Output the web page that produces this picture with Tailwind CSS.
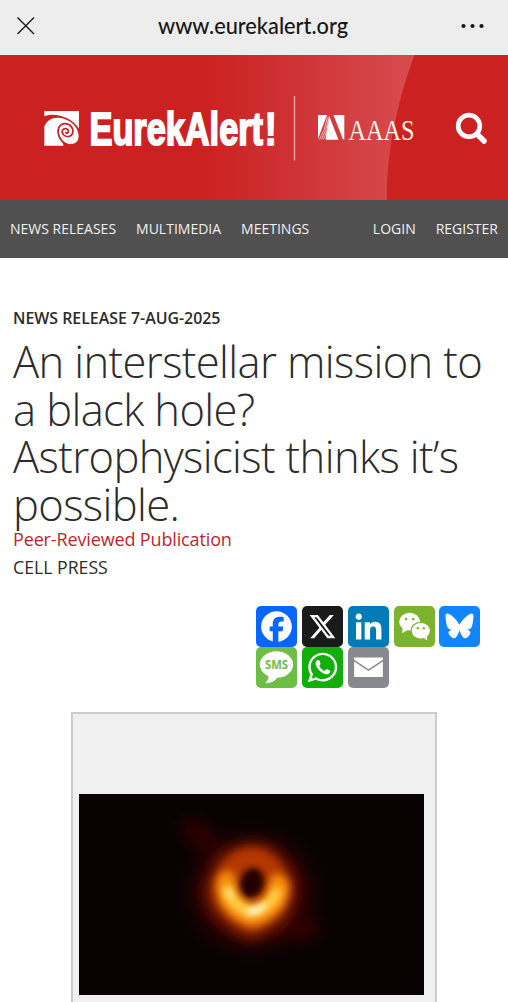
<!DOCTYPE html>
<html lang="en">
<head>
<meta charset="utf-8">
<title>EurekAlert!</title>
<script src="https://cdn.jsdelivr.net/npm/@tailwindcss/browser@4"></script>
</head>
<body class="w-[508px] h-[1002px] overflow-hidden bg-white font-['Open_Sans',sans-serif] text-[#2b2b2b]">
<div class="flex flex-col h-[1002px] overflow-hidden">
  <div class="h-[55px] shrink-0 bg-[#ededed] flex items-center justify-between pl-[16px] pr-[23px]">
    <svg class="w-[20px] h-[20px] mb-[4px]" viewBox="0 0 20 20" fill="none" stroke="#222" stroke-width="1.5"><path d="M1.5 1.5 18 18M18 1.5 1.5 18"/></svg>
    <svg class="w-[220px] h-[50px] ml-[9px] overflow-visible" viewBox="0 0 220 50"><text x="15" y="31" font-family="Lato, sans-serif" font-weight="500" font-size="22.5" fill="#161616" textLength="190" lengthAdjust="spacingAndGlyphs">www.eurekalert.org</text></svg>
    <svg class="w-[24px] h-[6px] mb-[4px]" viewBox="0 0 24 6" fill="#161616"><circle cx="2.500" cy="3" r="2.100"/><circle cx="11.500" cy="3" r="2.100"/><circle cx="20.500" cy="3" r="2.100"/></svg>
  </div>
  <header class="h-[145px] shrink-0">
    <svg class="w-[508px] h-[145px] block" viewBox="0 55 508 145">
      <defs><linearGradient id="sheen" gradientUnits="userSpaceOnUse" x1="205" y1="0" x2="405" y2="0"><stop offset="0" stop-color="#cc2121"/><stop offset=".5" stop-color="#d03538"/><stop offset="1" stop-color="#d74a4d"/></linearGradient></defs>
      <rect y="55" width="508" height="145" fill="#cc2121"/>
      <path d="M190 55H414.500C399 96 386 150 387 200H190Z" fill="url(#sheen)"/>
      <g transform="translate(44.300 111)">
        <path fill="#fff" d="M0 0H34.700V17.500C29 9 19 4 8 3.700 5 3.700 2 4.300 0 5.300Z"/>
        <path fill="#fff" d="M0 34.700V16C2 9.500 8 6.500 14 6.800 25 7.500 33.500 15 34.300 24 34.600 29.500 32 33 27 33L19 34.700Z"/>
        <path fill="none" stroke="#cc2121" stroke-width="1.700" stroke-linecap="round" d="M21.500 33.500C15 29 12.500 22 14.500 16.500 17 11.500 24 11.500 27.300 16 30 20 28.500 25 24.500 25.500 20 26 16.800 22.500 18.300 19 20 16.500 24 17.500 24.200 20.500 24 22.500 22 22.500 21.500 21.500"/>
        <path fill="#cc2121" d="M18 30.500 26 33.500V35.200H19.500Z"/>
      </g>
      <text x="89.500" y="145.400" font-family="'Liberation Sans Narrow','Liberation Sans',sans-serif" font-weight="700" font-size="46" fill="#fff" stroke="#fff" stroke-width="2" textLength="173.500" lengthAdjust="spacingAndGlyphs">EurekAlert</text>
      <text x="264.500" y="145.400" font-family="'Liberation Sans Narrow','Liberation Sans',sans-serif" font-weight="700" font-size="46" fill="#fff" stroke="#fff" stroke-width="1.500" textLength="12.500" lengthAdjust="spacingAndGlyphs">!</text>
      <path d="M294.500 96V160.500" stroke="#dda09c" stroke-width="1.500"/>
      <g transform="translate(318 115)"><path fill="#fff" d="M0 0H9L0 24Z"/><path fill="#fff" d="M11 .5 20.500 24.800H7.500Z"/><path fill="#fff" d="M15.500 0H26.300V24.500H25Z"/><path fill="none" d="M1.500 24.500Q7.500 14 9.500 2M3.500 24.500Q9 14 10.500 4M5.500 24.500Q10 15 11 6" stroke="#f3c9c6" stroke-width=".9"/></g>
      <text x="348.500" y="140" font-family="'Liberation Serif',serif" font-size="28.500" fill="#fff3e6" textLength="66" lengthAdjust="spacingAndGlyphs">AAAS</text>
      <g fill="none" stroke="#fff" stroke-width="4.700"><circle cx="469" cy="126" r="10.800"/><path d="M477 134 484 141" stroke-width="5.500" stroke-linecap="round"/></g>
    </svg>
  </header>
  <nav class="h-[58px] shrink-0 bg-[#505050] text-[#f0f0f0] text-[14px] flex items-center px-[10px] pb-[1px] whitespace-nowrap">
    <span>NEWS RELEASES</span><span class="ml-[20px]">MULTIMEDIA</span><span class="ml-[20px]">MEETINGS</span>
    <span class="ml-auto">LOGIN</span><span class="ml-[20px]">REGISTER</span>
  </nav>
  <main class="flex flex-col px-[13px] pt-[49px]">
    <p class="text-[15.900px] leading-[22px] font-semibold">NEWS RELEASE 7-AUG-2025</p>
    <h1 class="mt-[9px] text-[43.500px] leading-[47.500px] tracking-[-0.600px] font-light whitespace-nowrap">An interstellar mission to<br>a black hole?<br>Astrophysicist thinks it’s<br>possible.</h1>
    <p class="mt-[-2px] text-[18px] leading-[26px] tracking-[-0.140px] text-[#c01f2c]">Peer-Reviewed Publication</p>
    <p class="mt-[2px] text-[17.700px] leading-[26px]">CELL PRESS</p>
    <div class="mt-[25.500px] ml-[243.300px] flex flex-wrap gap-x-[4.800px] w-[230px]">
      <svg class="size-[41px] rounded-[5px] bg-[#0866ff]" viewBox="0 0 32 32"><path fill="#fff" d="M28 16c0-6.627-5.373-12-12-12S4 9.373 4 16c0 5.628 3.875 10.350 9.101 11.647v-7.980h-2.474V16H13.100v-1.580c0-4.085 1.849-5.978 5.859-5.978.76 0 2.072.15 2.608.298v3.325c-.283-.03-.775-.045-1.386-.045-1.967 0-2.728.745-2.728 2.683V16h3.920l-.673 3.667h-3.247v8.245C23.395 27.195 28 22.135 28 16"/></svg>
      <svg class="size-[41px] rounded-[5px] bg-[#1a1a1a]" viewBox="0 0 32 32"><path fill="#fff" d="M21.751 7h3.067l-6.700 7.658L26 25.078h-6.172l-4.833-6.320-5.531 6.320h-3.070l7.167-8.190L6 7h6.328l4.370 5.777L21.750 7Zm-1.076 16.242h1.700L11.404 8.740H9.580l11.094 14.503Z"/></svg>
      <svg class="size-[41px] rounded-[5px] bg-[#007bb5]" viewBox="0 0 32 32"><path fill="#fff" d="M6.227 12.610h4.190v13.480h-4.190zm2.095-6.700a2.430 2.430 0 0 1 0 4.860c-1.344 0-2.428-1.090-2.428-2.430s1.084-2.430 2.428-2.430m4.720 6.700h4.020v1.840h.058c.56-1.058 1.927-2.176 3.965-2.176 4.238 0 5.020 2.792 5.020 6.420v7.395h-4.183v-6.560c0-1.564-.03-3.574-2.178-3.574-2.180 0-2.514 1.700-2.514 3.460v6.668h-4.187z"/></svg>
      <svg class="size-[41px] rounded-[5px] bg-[#7bb32e]" viewBox="0 0 32 32"><g fill="#fff"><ellipse cx="12.200" cy="12.200" rx="8.200" ry="6.900"/><path d="M7 16 6.300 21.300 11 18.500Z"/></g><ellipse cx="20.800" cy="19.200" rx="8" ry="6.900" fill="#7bb32e"/><g fill="#fff"><ellipse cx="20.900" cy="19.300" rx="7.100" ry="6"/><path d="M22 24 26 27 25.600 22.500Z"/></g><g fill="#7bb32e"><circle cx="9.400" cy="10.200" r="1.050"/><circle cx="15" cy="10.200" r="1.050"/><circle cx="18.600" cy="17.300" r=".95"/><circle cx="23.300" cy="17.300" r=".95"/></g></svg>
      <svg class="size-[41px] rounded-[5px] bg-[#1185fe]" viewBox="0 0 32 32"><path fill="#fff" d="M16 14.700C14.800 12.200 11.400 8.200 8.300 6.400 6.300 5.300 5.100 5.700 5.100 8 5.100 10 5.700 14 6.200 15.600 6.900 17.700 8.400 18.500 10.300 18.600 8 19.200 6.400 20.400 8.200 22.600 9.600 24.400 11.600 26.200 13.300 24.300 14.700 22.700 15.400 20.800 16 19.200 16.600 20.800 17.300 22.700 18.700 24.300 20.400 26.200 22.400 24.400 23.800 22.600 25.600 20.400 24 19.200 21.700 18.600 23.600 18.500 25.100 17.700 25.800 15.600 26.300 14 26.900 10 26.900 8 26.900 5.700 25.700 5.300 23.700 6.400 20.600 8.200 17.200 12.200 16 14.700Z"/></svg>
      <svg class="size-[41px] rounded-[5px] bg-[#6cbe45]" viewBox="0 0 32 32"><ellipse cx="16" cy="13.700" rx="13" ry="10.300" fill="#fff"/><path fill="#fff" d="M9.500 20C10.500 24 9 26.500 7 28.300 12 28 15.500 26.500 17 23Z"/><text x="7" y="17" font-family="'Open Sans',sans-serif" font-weight="700" font-size="9.500" fill="#6cbe45" textLength="18" lengthAdjust="spacingAndGlyphs">SMS</text></svg>
      <svg class="size-[41px] rounded-[5px] bg-[#12af0a]" viewBox="0 0 32 32"><path fill="#fff" fill-rule="evenodd" d="M16.210 4.410C9.973 4.410 4.917 9.465 4.917 15.700c0 2.134.592 4.130 1.620 5.832L4.500 27.590l6.250-2.002a11.240 11.240 0 0 0 5.460 1.404c6.234 0 11.290-5.055 11.290-11.290 0-6.237-5.056-11.292-11.290-11.292m0 20.690c-1.910 0-3.690-.57-5.173-1.553l-3.610 1.156 1.173-3.490a9.350 9.350 0 0 1-1.790-5.512c0-5.180 4.217-9.400 9.400-9.400s9.397 4.220 9.397 9.400c0 5.188-4.214 9.400-9.398 9.400zm5.293-6.832c-.284-.155-1.673-.906-1.934-1.012-.265-.106-.455-.16-.658.12s-.78.91-.954 1.096c-.176.186-.345.203-.628.048-.282-.154-1.200-.494-2.264-1.517-.83-.795-1.373-1.760-1.530-2.055s0-.445.15-.584c.134-.124.3-.326.45-.488.15-.163.203-.28.306-.47.104-.19.06-.36-.005-.506-.066-.147-.59-1.587-.81-2.173-.218-.586-.46-.498-.63-.505-.168-.007-.358-.038-.55-.045-.19-.007-.51.054-.78.332-.277.274-1.050.943-1.100 2.362-.055 1.418.926 2.826 1.064 3.023.137.2 1.874 3.272 4.760 4.537 2.888 1.264 2.900.878 3.430.85.53-.027 1.734-.633 2-1.297s.287-1.240.22-1.363c-.07-.123-.26-.19-.54-.346z"/></svg>
      <svg class="size-[41px] rounded-[5px] bg-[#88898f]" viewBox="0 0 32 32"><rect x="4.800" y="8.200" width="22.400" height="15.200" fill="#fff"/><path d="M4.500 10.500 16 18 27.500 10.500" fill="none" stroke="#88898f" stroke-width="1.200"/></svg>
    </div>
    <figure class="mt-[24.500px] ml-[58px] w-[366px] h-[330px] shrink-0 border-2 border-[#ccc] bg-[#f0f0f0] pt-[80px] pl-[6px]">
      <svg class="w-[345px] h-[201px] block" viewBox="0 0 345 201">
        <defs>
          <filter id="b2" x="-100%" y="-100%" width="300%" height="300%"><feGaussianBlur stdDeviation="3"/></filter>
          <filter id="b4" x="-50%" y="-50%" width="200%" height="200%"><feGaussianBlur stdDeviation="4.500"/></filter>
          <filter id="b8" x="-60%" y="-60%" width="220%" height="220%"><feGaussianBlur stdDeviation="8"/></filter>
          <filter id="b12" x="-60%" y="-60%" width="220%" height="220%"><feGaussianBlur stdDeviation="12"/></filter>
        </defs>
        <rect width="345" height="201" fill="#080202"/>
        <g filter="url(#b12)"><ellipse cx="173" cy="98" rx="55" ry="50" fill="#4a0500"/></g>
        <g filter="url(#b8)"><ellipse cx="122" cy="43" rx="24" ry="12" transform="rotate(42 122 43)" fill="#2e0300"/><ellipse cx="221" cy="134" rx="20" ry="12" fill="#300300"/><path d="M172 52C196 51 213 74 213 96 213 120 187 138 172 144 157 137 130 119 130 99 132 74 151 53 172 52Z" fill="#a63000"/></g>
        <g filter="url(#b4)" fill="none" stroke-linecap="round"><ellipse cx="172" cy="91" rx="25" ry="27" stroke="#b53804" stroke-width="17"/><path d="M147 88C145 107 160 120 174 123 190 119 202 105 200 91" stroke="#fa900e" stroke-width="20"/></g>
        <g filter="url(#b2)"><path d="M149 97C153 109 164 117 175 117 185 115 194 107 197 99" fill="none" stroke="#ffca42" stroke-width="11" stroke-linecap="round"/><ellipse cx="173" cy="89" rx="11.500" ry="15" transform="rotate(15 173 89)" fill="#200200"/><ellipse cx="177" cy="116" rx="11" ry="4.500" transform="rotate(-28 177 116)" fill="#fff6b0"/><ellipse cx="150" cy="99" rx="4" ry="7" transform="rotate(-20 150 99)" fill="#ffe270"/></g>
      </svg>
    </figure>
  </main>
</div>
</body>
</html>
